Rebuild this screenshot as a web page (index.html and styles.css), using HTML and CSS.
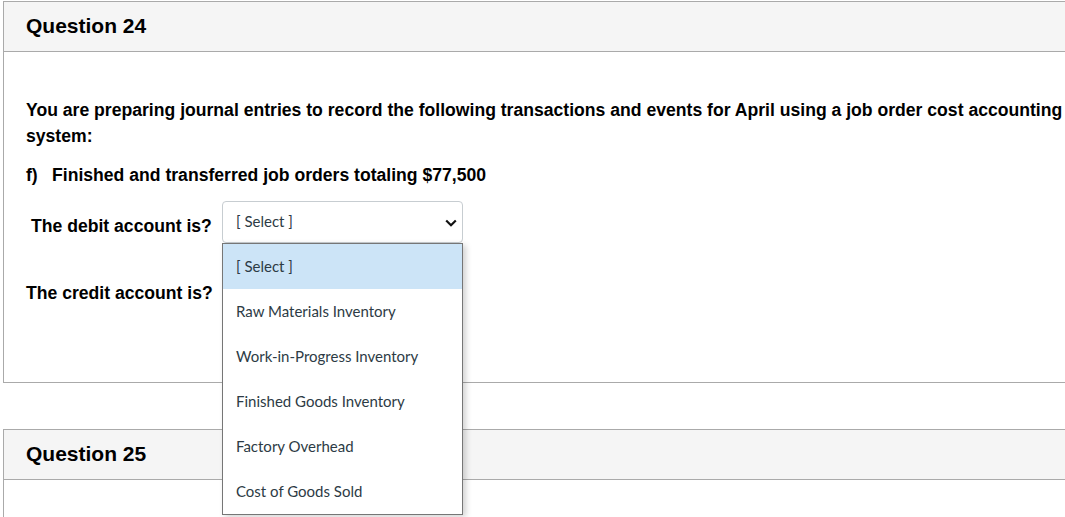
FILE: index.html
```html
<!DOCTYPE html>
<html>
<head>
<meta charset="utf-8">
<link rel="stylesheet" href="styles.css">
</head>
<body>
<div class="page">
  <div class="card">
    <div class="card-head"><h2>Question 24</h2></div>
    <div class="card-body q24">
      <p class="lead">You are preparing journal entries to record the following transactions and events for April using a job order cost accounting system:</p>
      <p class="item"><span class="mark">f)</span>Finished and transferred job orders totaling $77,500</p>
      <div class="row debit">
        <span class="label">The debit account is?</span>
        <div class="select-wrap">
          <div class="select">
            <span>[ Select ]</span>
            <svg class="chev" width="12" height="8" viewBox="0 0 12 8"><path d="M1.2 1.5 L6 6.2 L10.8 1.5" fill="none" stroke="#111" stroke-width="2.2"/></svg>
          </div>
          <ul class="menu">
            <li class="active">[ Select ]</li>
            <li>Raw Materials Inventory</li>
            <li>Work-in-Progress Inventory</li>
            <li>Finished Goods Inventory</li>
            <li>Factory Overhead</li>
            <li>Cost of Goods Sold</li>
          </ul>
        </div>
      </div>
      <div class="row credit">
        <span class="label">The credit account is?</span>
        <div class="select-wrap">
          <div class="select">
            <span>[ Select ]</span>
            <svg class="chev" width="12" height="8" viewBox="0 0 12 8"><path d="M1.2 1.5 L6 6.2 L10.8 1.5" fill="none" stroke="#111" stroke-width="2.2"/></svg>
          </div>
        </div>
      </div>
    </div>
  </div>
  <div class="card second">
    <div class="card-head"><h2>Question 25</h2></div>
    <div class="card-body q25"></div>
  </div>
</div>
</body>
</html>
```
FILE: styles.css
```css
html, body {
  margin: 0;
  padding: 0;
  background: #fff;
  overflow: hidden;
}
body {
  font-family: "Liberation Sans", Arial, sans-serif;
  color: #000;
}
.page {
  padding: 1px 0 0 3px;
}
.card {
  border: 1px solid #aaa;
  border-right: none;
  margin-right: -20px;
}
.card.second {
  margin-top: 46px;
}
.card-head {
  background: #f5f5f5;
  border-bottom: 1px solid #aaa;
  height: 50px;
  box-sizing: border-box;
  padding: 0 0 1px 22px;
  display: flex;
  align-items: center;
}
.card-head h2 {
  margin: 0;
  font-size: 21px;
  font-weight: bold;
  line-height: 24px;
}
.card-body {
  padding: 45px 0 0 22px;
  box-sizing: border-box;
}
.q24 {
  height: 330px;
}
.q25 {
  height: 60px;
}
.card-body p {
  margin: 0;
  font-size: 17.6px;
  font-weight: bold;
  line-height: 26px;
  width: 1050px;
}
.card-body p.item {
  margin-top: 13px;
}
.mark {
  display: inline-block;
  width: 26px;
}
.row {
  display: flex;
  align-items: flex-start;
}
.row .label {
  font-size: 17.6px;
  font-weight: bold;
  line-height: 20px;
  margin-top: 15px;
  white-space: nowrap;
}
.row.debit {
  margin-top: 13px;
  padding-left: 5px;
}
.row.debit .label {
  width: 191px;
}
.row.credit {
  margin-top: 25px;
}
.row.credit .label {
  width: 196px;
}
.select-wrap {
  position: relative;
  width: 241px;
}
.select {
  box-sizing: border-box;
  height: 42px;
  border: 1px solid #c7cdd1;
  border-radius: 4px;
  background: #fff;
  display: flex;
  align-items: center;
  justify-content: space-between;
  padding: 0 5px 0 13px;
  font-family: Lato, "Open Sans", sans-serif;
  font-size: 15px;
  color: #2d3b45;
}
.select span {
  margin-top: -3px;
}
.chev {
  margin-top: 1px;
}
.menu {
  position: absolute;
  z-index: 5;
  left: 0;
  top: 42px;
  width: 241px;
  box-sizing: border-box;
  margin: 0;
  padding: 0;
  list-style: none;
  background: #fff;
  border: 1px solid #767676;
  box-shadow: 3px 2px 6px rgba(0, 0, 0, 0.18);
  font-family: Lato, "Open Sans", sans-serif;
  font-size: 15px;
  color: #2d3b45;
}
.menu li {
  height: 45px;
  line-height: 45px;
  padding-left: 13px;
}
.menu li.active {
  background: #cce4f7;
}
```
